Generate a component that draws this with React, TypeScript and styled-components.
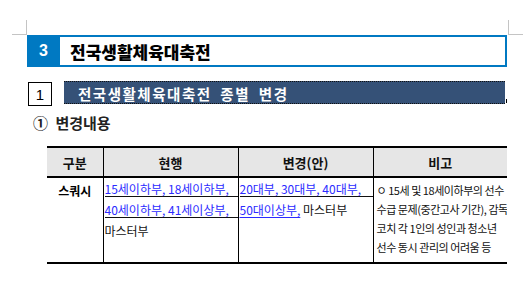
import React from 'react';
import styled, { createGlobalStyle } from 'styled-components';

const GlobalStyle = createGlobalStyle`
  body {
    margin: 0;
    background: #fff;
    font-family: "Noto Sans CJK KR", "Noto Sans", sans-serif;
    color: #111;
  }
`;

const BLUE = '#0079c2';
const NAVY = '#355177';
const LINK = '#2b2bff';

interface LineProps {
  rule?: boolean;
}

const current = [
  { text: '15세이하부, 18세이하부,', link: true, rule: true },
  { text: '40세이하부, 41세이상부,', link: true, rule: true },
  { text: '마스터부', link: false, rule: false },
];

const notes = [
  'ㅇ 15세 및 18세이하부의 선수',
  '수급 문제(중간고사 기간), 감독',
  '코치 각 1인의 성인과 청소년',
  '선수 동시 관리의 어려움 등',
];

function App() {
  return (
    <Page>
      <GlobalStyle />
      <CropMarks>
        <Mark side="left" />
        <Mark side="right" />
      </CropMarks>
      <Content>
        <SectionHeader>
          <SectionNum>3</SectionNum>
          <SectionTitle>전국생활체육대축전</SectionTitle>
        </SectionHeader>

        <SubHeader>
          <SubNum>1</SubNum>
          <SubBar>전국생활체육대축전 종별 변경</SubBar>
          <Tick />
        </SubHeader>

        <Heading>① 변경내용</Heading>

        <Table>
          <colgroup>
            <col style={{ width: 56 }} />
            <col style={{ width: 135 }} />
            <col style={{ width: 135 }} />
            <col style={{ width: 134 }} />
          </colgroup>
          <thead>
            <tr>
              <Th>구분</Th>
              <Th>현행</Th>
              <Th>변경(안)</Th>
              <Th>비고</Th>
            </tr>
          </thead>
          <tbody>
            <tr>
              <Label>스쿼시</Label>
              <Td>
                {current.map((l) => (
                  <Line key={l.text} rule={l.rule}>
                    {l.link ? <Link>{l.text}</Link> : l.text}
                  </Line>
                ))}
              </Td>
              <Td>
                <Line rule>
                  <Link>20대부, 30대부, 40대부,</Link>
                </Line>
                <Line>
                  <Link underline>50대이상부,</Link> 마스터부
                </Line>
              </Td>
              <NoteCell>
                {notes.map((n) => (
                  <Note key={n}>{n}</Note>
                ))}
              </NoteCell>
            </tr>
          </tbody>
        </Table>
      </Content>
    </Page>
  );
}

export default App;

const Page = styled.div`
  width: 530px;
  height: 305px;
  padding-top: 20px;
  box-sizing: border-box;
  overflow: hidden;
`;

const CropMarks = styled.div`
  display: flex;
  justify-content: space-between;
  width: 511px;
  margin-left: 12px;
`;

const Mark = styled.div<{ side: 'left' | 'right' }>`
  width: 14px;
  height: 14px;
  border-bottom: 1px solid #c4c4c4;
  ${(p) =>
    p.side === 'left'
      ? 'border-right: 1px solid #c4c4c4;'
      : 'border-left: 1px solid #c4c4c4;'}
`;

const Content = styled.div`
  margin-left: 27px;
  width: 480px;
  display: flex;
  flex-direction: column;
`;

const SectionHeader = styled.div`
  display: flex;
  height: 32px;
`;

const SectionNum = styled.div`
  width: 33px;
  background: ${BLUE};
  color: #fff;
  font-family: "Liberation Sans", sans-serif;
  font-weight: 700;
  font-size: 16px;
  display: flex;
  align-items: center;
  justify-content: center;
`;

const SectionTitle = styled.div`
  flex: 1;
  border: 2px solid ${BLUE};
  border-left: none;
  display: flex;
  align-items: center;
  padding-left: 10px;
  font-size: 17px;
  font-weight: 900;
  color: #000;
`;

const SubHeader = styled.div`
  display: flex;
  align-items: flex-start;
  margin-top: 14px;
  height: 25px;
`;

const SubNum = styled.div`
  margin: 1px 0 0 1px;
  width: 22px;
  height: 22px;
  border: 1px solid #000;
  display: flex;
  align-items: center;
  justify-content: center;
  font-family: "Liberation Sans", sans-serif;
  font-size: 15px;
  color: #000;
`;

const SubBar = styled.div`
  margin-left: 12px;
  width: 441px;
  height: 23px;
  background: ${NAVY};
  border-top: 1px dotted #111;
  border-bottom: 1px dotted #111;
  color: #fff;
  font-weight: 700;
  font-size: 14.5px;
  letter-spacing: 1.5px;
  word-spacing: 4px;
  line-height: 23px;
  padding-left: 14px;
  box-sizing: border-box;
  white-space: nowrap;
`;

const Tick = styled.div`
  align-self: flex-end;
  margin: 0 0 3px 1px;
  width: 1px;
  height: 4px;
  background: #000;
`;

const Heading = styled.div`
  margin: 7px 0 0 6px;
  font-size: 15px;
  line-height: 20px;
  font-weight: 700;
  color: #222;
  word-spacing: 4px;
`;

const Table = styled.table`
  margin: 13px 0 0 20px;
  width: 460px;
  table-layout: fixed;
  border-collapse: collapse;
  border-bottom: 2px solid #000;
`;

const Th = styled.th`
  height: 28px;
  padding: 0;
  background: #e6e6e6;
  border-top: 2px solid #000;
  border-bottom: 2px solid #000;
  font-size: 13px;
  font-weight: 700;
  color: #111;
  & + & {
    border-left: 1px solid #000;
  }
`;

const Td = styled.td`
  height: 81px;
  padding: 0 0 0 1px;
  vertical-align: top;
  border-left: 1px solid #000;
  font-size: 12px;
  overflow: hidden;
`;

const Label = styled.td`
  padding: 5px 0 0;
  vertical-align: top;
  text-align: center;
  font-size: 12px;
  font-weight: 700;
  line-height: 15px;
  color: #000;
`;

const Line = styled.div<LineProps>`
  padding-top: 3px;
  line-height: 15px;
  margin-bottom: 2px;
  white-space: nowrap;
  color: #111;
  border-bottom: 1px solid ${(p) => (p.rule ? '#111' : 'transparent')};
`;

const Link = styled.span<{ underline?: boolean }>`
  color: ${LINK};
  text-decoration: ${(p) => (p.underline ? 'underline' : 'none')};
  text-underline-offset: 2px;
`;

const NoteCell = styled(Td)`
  padding: 3px 0 0 3px;
  font-size: 11px;
`;

const Note = styled.div`
  line-height: 19px;
  letter-spacing: -0.45px;
  white-space: nowrap;
  color: #111;
`;
